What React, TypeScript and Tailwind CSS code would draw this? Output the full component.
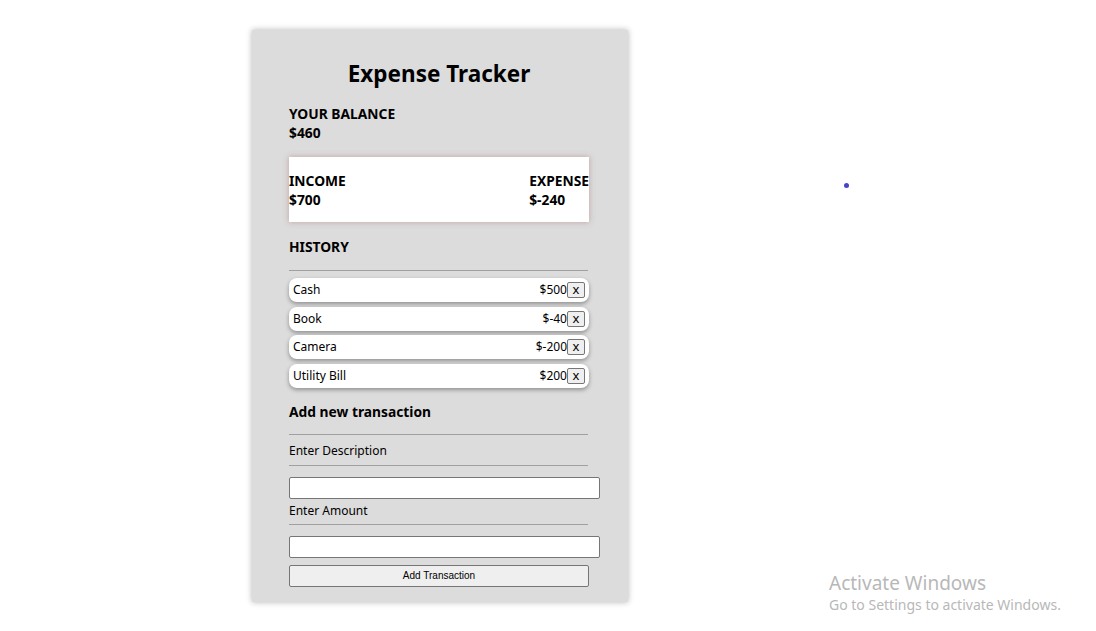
import React from "react";

const items = [
  { name: "Cash", amount: "$500" },
  { name: "Book", amount: "$-40" },
  { name: "Camera", amount: "$-200" },
  { name: "Utility Bill", amount: "$200" },
];

export default function App() {
  return (
    <div className="relative min-h-[631px] w-[1096px] bg-white text-black" style={{ fontFamily: '"Noto Sans", "Open Sans", sans-serif' }}>
      <div className="pt-[30px]">
        <div className="ml-[252px] flex w-[376px] flex-col bg-[#dcdcdc] pl-[37px] pr-[39px] pt-[28px] pb-[15px] shadow-[0_0_6px_rgba(0,0,0,0.3)]">
          <h2 className="text-center text-[22.5px] font-bold leading-[32px]">Expense Tracker</h2>
          <div className="mt-[14px] text-[13.8px] font-bold leading-[19px]">YOUR BALANCE</div>
          <div className="text-[13.8px] font-bold leading-[19px]">$460</div>
          <div className="mt-[15px] flex h-[65px] justify-between bg-white pt-[14px] shadow-[0_0_6px_rgba(150,90,90,0.45)]">
            <div className="text-[13.8px] font-bold leading-[19px]">
              <div>INCOME</div>
              <div>$700</div>
            </div>
            <div className="text-[13.8px] font-bold leading-[19px]">
              <div>EXPENSE</div>
              <div>$-240</div>
            </div>
          </div>
          <div className="mt-[15px] text-[13.8px] font-bold leading-[19px]">HISTORY</div>
          <div className="mt-[14px] h-px w-[299px] bg-[#a0a0a0]" />
          <div className="mt-[7px] flex flex-col gap-[4.67px]">
            {items.map((it) => (
              <div key={it.name} className="flex h-[24px] items-center justify-between rounded-[8px] bg-white pl-[4px] pr-[4px] text-[12px] shadow-[0_2px_4px_rgba(0,0,0,0.35)]">
                <span>{it.name}</span>
                <span className="flex items-center">
                  <span>{it.amount}</span>
                  <span className="flex h-[16px] w-[18px] items-center justify-center rounded-[2px] border border-[#767676] bg-[#efefef] pb-[1px] text-[13px] leading-none">x</span>
                </span>
              </div>
            ))}
          </div>
          <div className="mt-[14px] text-[13.8px] font-bold leading-[19px]">Add new transaction</div>
          <div className="mt-[13px] h-px w-[299px] bg-[#a0a0a0]" />
          <div className="mt-[8px] text-[12px] leading-[16px]">Enter Description</div>
          <div className="mt-[6px] h-px w-[299px] bg-[#a0a0a0]" />
          <div className="mt-[11px] h-[22px] w-[311px] shrink-0 rounded-[2px] border border-[#767676] bg-white" />
          <div className="mt-[4px] text-[12px] leading-[16px]">Enter Amount</div>
          <div className="mt-[5px] h-px w-[299px] bg-[#a0a0a0]" />
          <div className="mt-[11px] h-[22px] w-[311px] shrink-0 rounded-[2px] border border-[#767676] bg-white" />
          <button className="mt-[7px] flex h-[22px] w-[300px] items-center justify-center rounded-[2px] border border-[#767676] bg-[#efefef] text-[10px]" style={{ fontFamily: '"Liberation Sans", Arial, sans-serif' }}>
            Add Transaction
          </button>
        </div>
      </div>
      <div className="absolute left-[844px] top-[183px] h-[5px] w-[5px] rounded-full bg-[#4444cc]" />
      <div className="absolute left-[829px] top-[571px] text-[#b8b8b8]">
        <div className="text-[19px] leading-[24px]">Activate Windows</div>
        <div className="text-[14px] leading-[20px]">Go to Settings to activate Windows.</div>
      </div>
    </div>
  );
}
